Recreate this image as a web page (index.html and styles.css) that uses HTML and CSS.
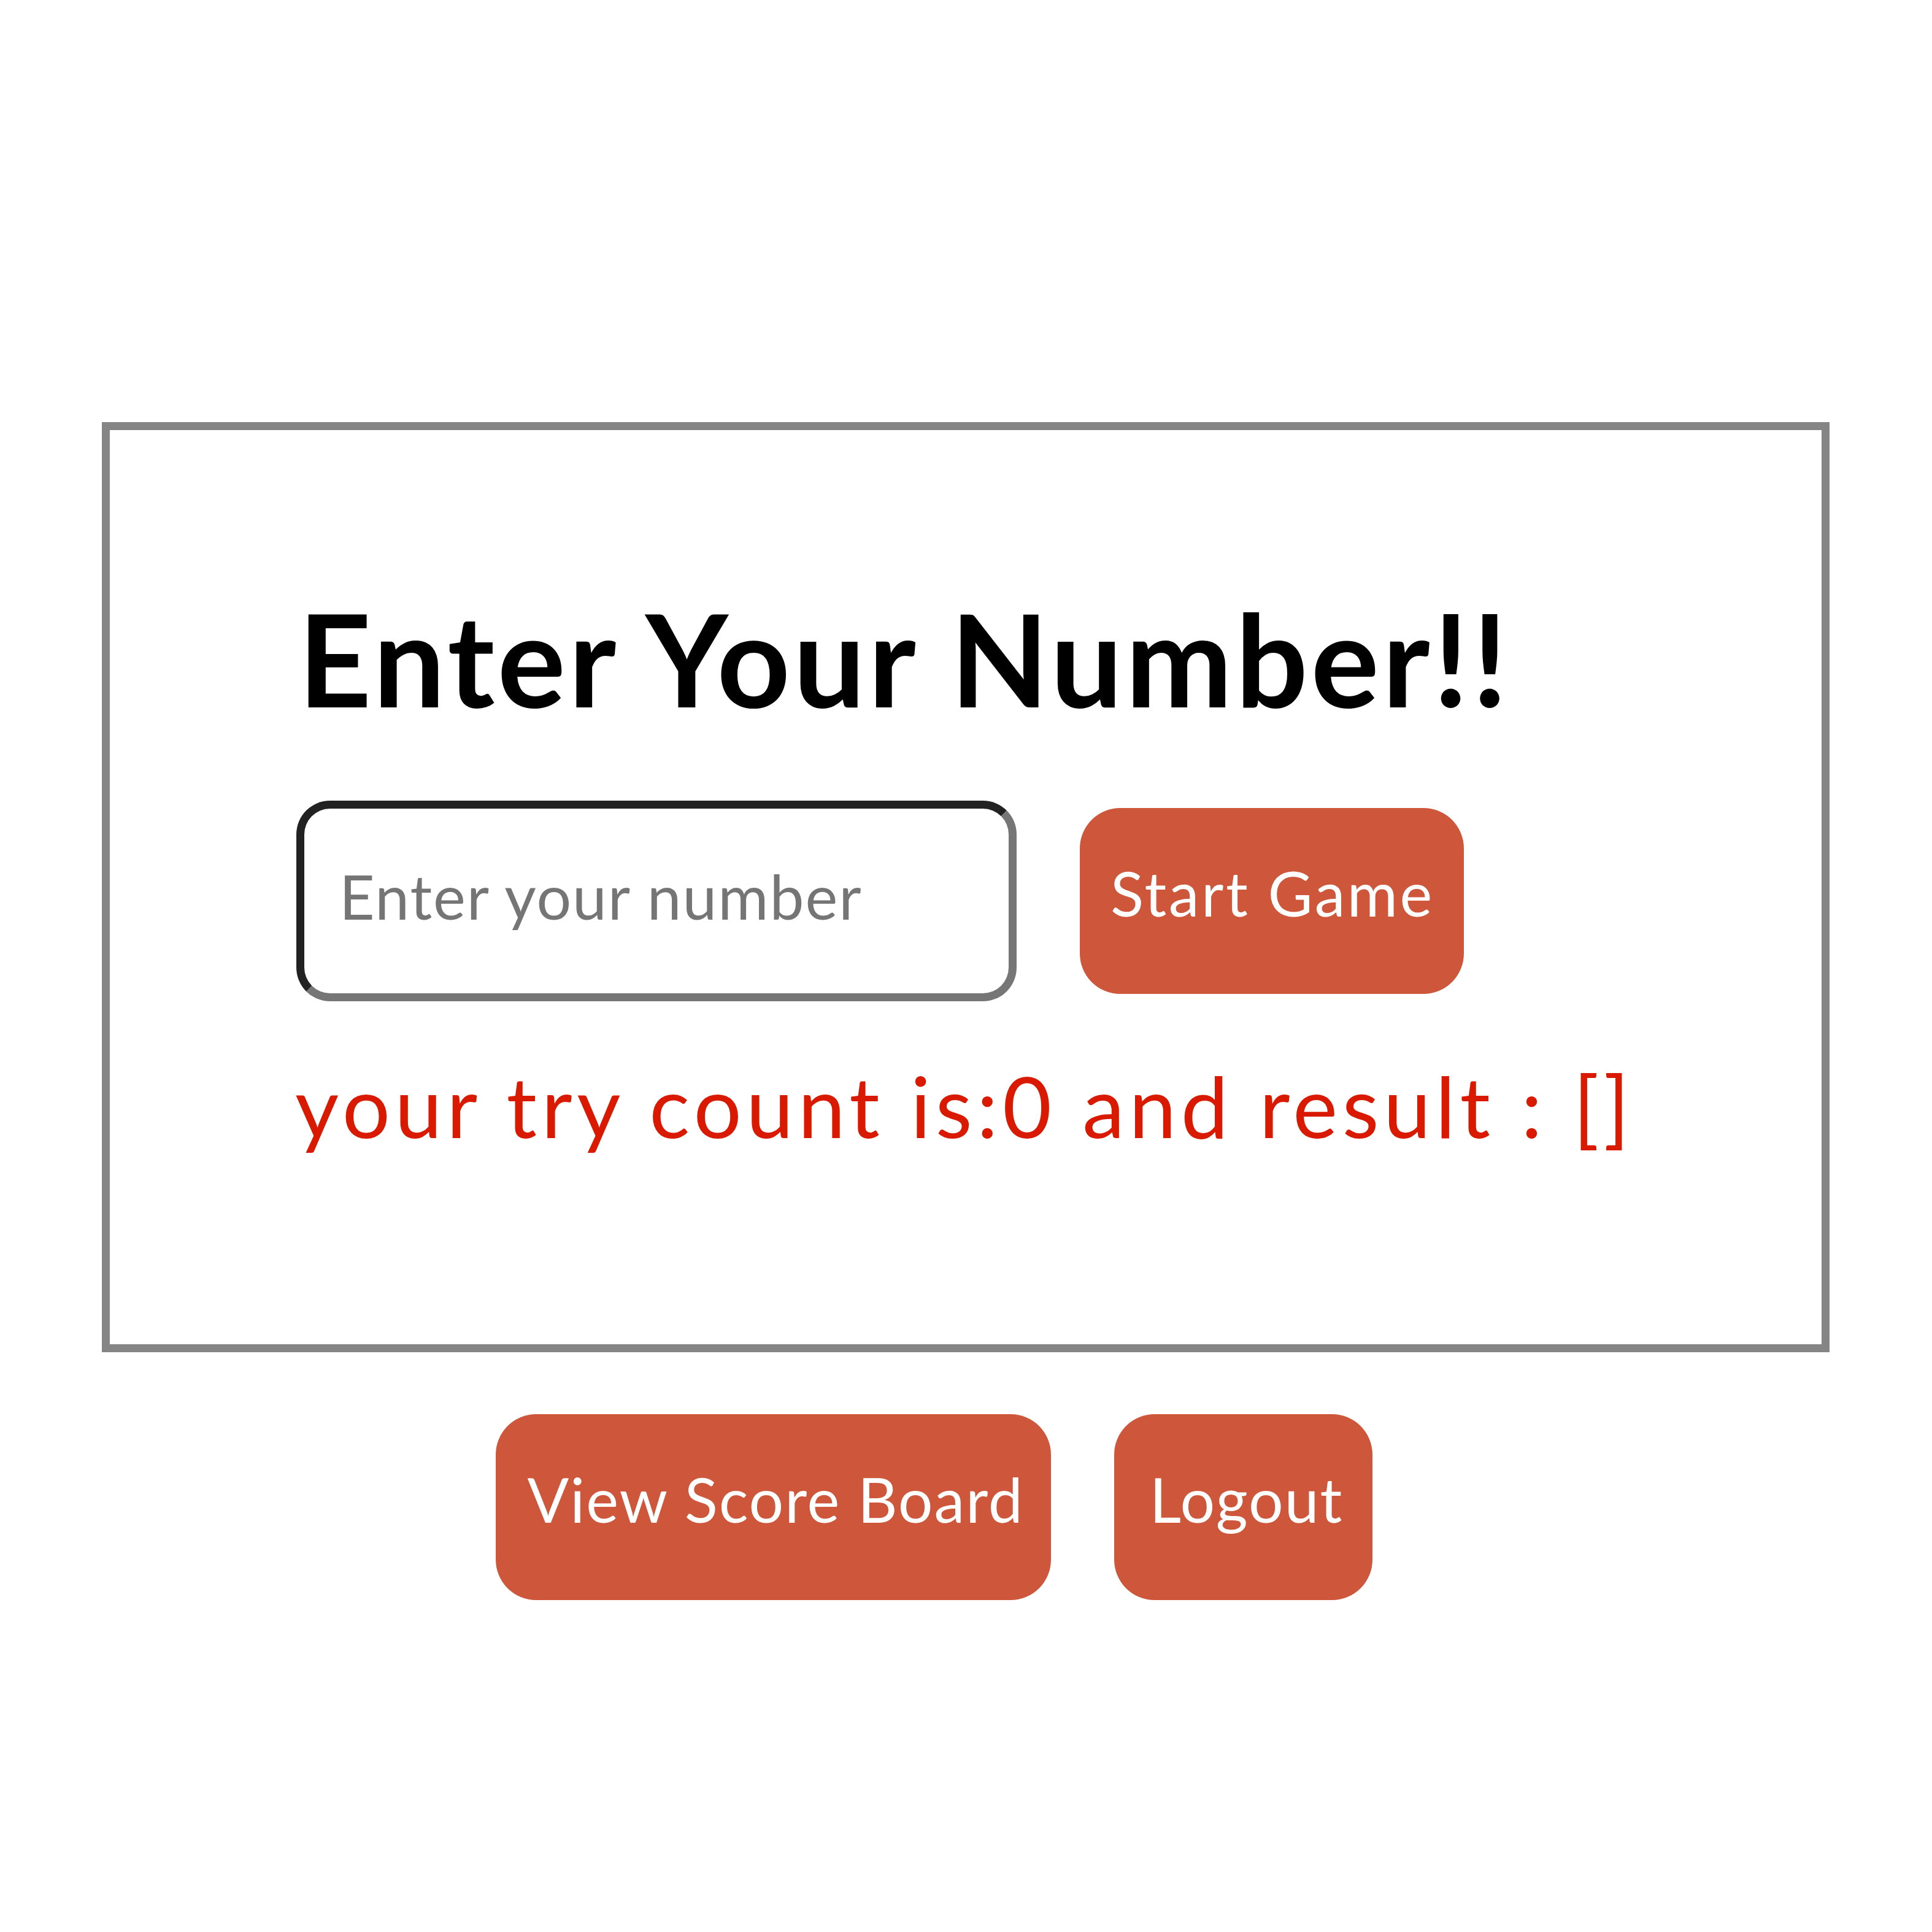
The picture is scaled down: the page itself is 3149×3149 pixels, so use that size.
FILE: index.html
```html
<!DOCTYPE html>
<html lang="en">
<head>
<meta charset="utf-8">
<title>Guess Game</title>
<link rel="stylesheet" href="styles.css">
</head>
<body>
<main class="page">
  <section class="card">
    <h1 class="title">Enter Your Number!!</h1>
    <div class="entry">
      <input class="number-input" type="text" placeholder="Enter your number">
      <button class="btn btn-start">Start Game</button>
    </div>
    <p class="result">your try count is:0 and result : []</p>
  </section>
  <div class="actions">
    <button class="btn btn-score">View Score Board</button>
    <button class="btn btn-logout">Logout</button>
  </div>
</main>
</body>
</html>
```
FILE: styles.css
```css
html, body {
  margin: 0;
  padding: 0;
  background: #ffffff;
}

body {
  font-family: "Lato", "Open Sans", sans-serif;
}

.page {
  padding: 688px 167px 0 166px;
  display: flex;
  flex-direction: column;
}

.card {
  border: 13px solid #858585;
  padding: 268px 0 320px 317px;
  display: flex;
  flex-direction: column;
  align-items: flex-start;
}

.title {
  margin: 0 0 0 -10px;
  font-size: 208px;
  font-weight: 700;
  letter-spacing: 5px;
  line-height: 1;
  color: #000000;
}

.entry {
  margin-top: 128px;
  display: flex;
  align-items: center;
  gap: 103px;
}

.number-input {
  box-sizing: border-box;
  width: 1174px;
  height: 327px;
  margin: 0 0 0 -13px;
  padding: 0 0 18px 57px;
  border: 13px solid;
  border-color: #222222 #767676 #767676 #222222;
  border-radius: 55px;
  font-family: inherit;
  font-size: 100px;
  letter-spacing: 2px;
  color: #000000;
  background: #ffffff;
  outline: none;
}

.number-input::placeholder {
  color: #757575;
}

.btn {
  box-sizing: border-box;
  height: 303px;
  border: none;
  border-radius: 66px;
  background: #cd563b;
  color: #ffffff;
  font-family: inherit;
  font-size: 100px;
  letter-spacing: 2px;
  padding: 0 52px 28px;
  line-height: 1;
  cursor: pointer;
}

.btn-start {
  letter-spacing: 3.5px;
  padding-left: 50px;
  padding-right: 48px;
}

.btn-score {
  padding-left: 52px;
  padding-right: 44px;
}

.btn-logout {
  padding-left: 58px;
  padding-right: 48px;
}

.result {
  margin: 101px 0 0 -15px;
  font-size: 138px;
  letter-spacing: 7.5px;
  line-height: 1;
  color: #d91a00;
}

.actions {
  margin-top: 101px;
  display: flex;
  justify-content: center;
}

.actions .btn {
  margin-right: 103px;
}
```
